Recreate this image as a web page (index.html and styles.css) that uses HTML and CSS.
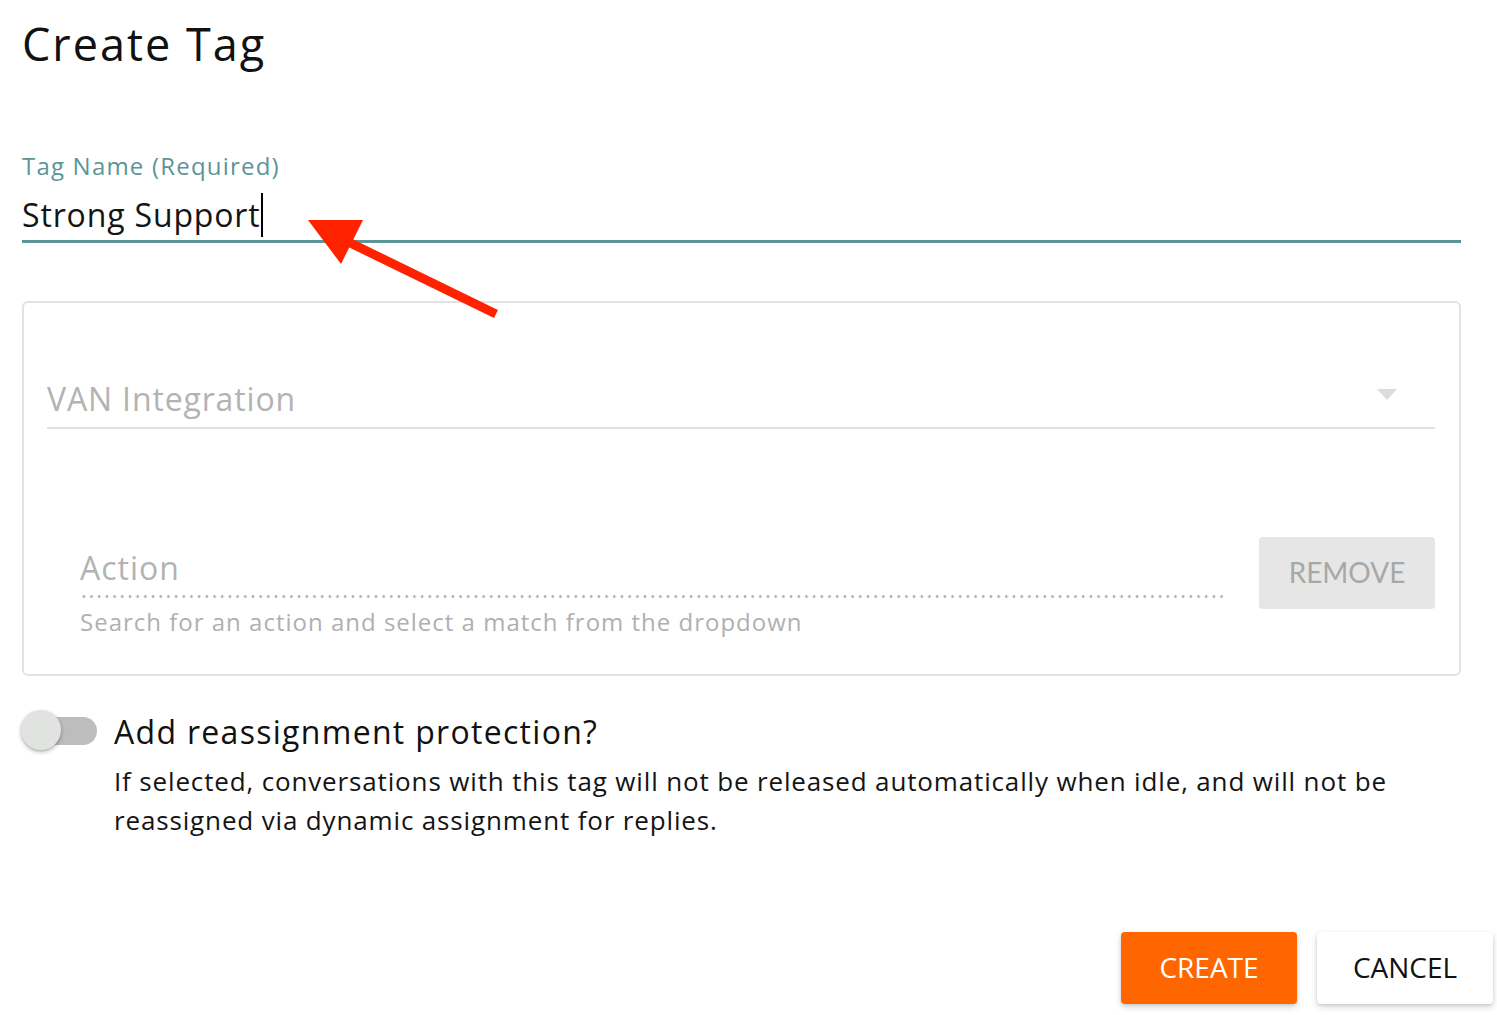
FILE: index.html
```html
<!DOCTYPE html>
<html lang="en">
<head>
<meta charset="utf-8">
<title>Create Tag</title>
<link rel="stylesheet" href="styles.css">
</head>
<body>
<div class="dialog">
  <div class="form">
    <h1 class="title">Create Tag</h1>
    <div class="field">
      <label class="field-label">Tag Name (Required)</label>
      <div class="input"><span class="input-text">Strong Support</span><span class="caret"></span></div>
    </div>
    <section class="card">
      <div class="select">
        <span class="select-text">VAN Integration</span>
        <span class="select-arrow"></span>
      </div>
      <div class="action-row">
        <div class="action-field">
          <div class="action-input">Action</div>
          <div class="helper">Search for an action and select a match from the dropdown</div>
        </div>
        <button class="btn-remove" type="button">REMOVE</button>
      </div>
    </section>
    <div class="protect">
      <div class="switch"><span class="switch-track"></span><span class="switch-thumb"></span></div>
      <div class="protect-text">
        <h2 class="protect-title">Add reassignment protection?</h2>
        <p class="protect-desc">If selected, conversations with this tag will not be released automatically when idle, and will not be reassigned via dynamic assignment for replies.</p>
      </div>
    </div>
  </div>
  <div class="actions">
    <button class="btn btn-create" type="button">CREATE</button>
    <button class="btn btn-cancel" type="button">CANCEL</button>
  </div>
  <svg class="annotation" width="1497" height="1015" viewBox="0 0 1497 1015" aria-hidden="true">
    <line x1="496" y1="314" x2="336" y2="236" stroke="#ff2200" stroke-width="9"/>
    <polygon points="308,220 363,220 341,264" fill="#ff2200"/>
  </svg>
</div>
</body>
</html>
```
FILE: styles.css
```css
* { box-sizing: border-box; }
html, body { margin: 0; padding: 0; background: #fff; }
body {
  font-family: "Open Sans", "Liberation Sans", sans-serif;
  color: #141414;
}
.dialog {
  position: relative;
  width: 1497px;
  height: 1015px;
  padding: 14px 4px 0 22px;
  overflow: hidden;
}
.form { margin-right: 32px; }
.title {
  margin: 0;
  font-size: 45px;
  line-height: 60px;
  font-weight: 400;
  letter-spacing: 2px;
  color: #111;
}
.field { margin-top: 76px; }
.field-label {
  display: block;
  font-size: 24px;
  line-height: 32px;
  letter-spacing: 1.2px;
  color: #5b9599;
}
.input {
  margin-top: 11px;
  height: 50px;
  padding-bottom: 3px;
  border-bottom: 3px solid #5b9599;
  display: flex;
  align-items: flex-start;
}
.input-text {
  font-size: 32px;
  line-height: 44px;
  letter-spacing: 0.85px;
  color: #141414;
}
.caret {
  width: 2px;
  height: 44px;
  background: #000;
}
.card {
  margin-top: 58px;
  border: 2px solid #e0e3e2;
  border-radius: 6px;
  padding: 0 24px 36px 23px;
}
.select {
  margin-top: 74px;
  height: 52px;
  padding-bottom: 6px;
  border-bottom: 2px solid #e0e0e0;
  display: flex;
  justify-content: space-between;
  align-items: flex-start;
}
.select-text {
  font-size: 32px;
  line-height: 44px;
  letter-spacing: 0.85px;
  color: #b3b3b3;
}
.select-arrow {
  width: 0;
  height: 0;
  margin-top: 12px;
  margin-right: 38px;
  border-left: 10px solid transparent;
  border-right: 10px solid transparent;
  border-top: 11px solid #dcdcdc;
}
.action-row {
  margin-top: 108px;
  padding-left: 33px;
  display: flex;
  align-items: flex-start;
  gap: 33px;
}
.action-field { flex: 1; padding-top: 9px; }
.action-input {
  font-size: 32px;
  line-height: 44px;
  letter-spacing: 1px;
  color: #b3b3b3;
  padding-bottom: 5px;
  background-image: radial-gradient(circle, #b5b5b5 1.3px, transparent 1.6px);
  background-size: 7.7px 3px;
  background-repeat: repeat-x;
  background-position: 0 100%;
  height: 52px;
}
.helper {
  margin-top: 8px;
  font-size: 24px;
  line-height: 32px;
  letter-spacing: 1px;
  color: #b0b0b0;
}
.btn-remove {
  width: 176px;
  height: 72px;
  border: 0;
  border-radius: 4px;
  background: #e6e6e6;
  color: #a8a8a8;
  font-family: Lato, "Open Sans", sans-serif;
  font-size: 28px;
  padding: 0 0 2px;
}
.protect {
  margin-top: 34px;
  display: flex;
  align-items: flex-start;
}
.switch {
  position: relative;
  flex: none;
  width: 76px;
  height: 40px;
  margin-left: -1px;
  margin-right: 17px;
}
.switch-track {
  display: block;
  margin: 7px 0 0 6px;
  width: 70px;
  height: 28px;
  border-radius: 14px;
  background: #bdbdbd;
}
.switch-thumb {
  position: absolute;
  left: 0;
  top: 0;
  width: 40px;
  height: 40px;
  border-radius: 50%;
  background: #e1e3e1;
  box-shadow: 0 2px 4px rgba(0,0,0,0.25), 0 1px 2px rgba(0,0,0,0.12);
}
.protect-text { flex: 1; }
.protect-title {
  margin: 0;
  font-size: 32px;
  line-height: 44px;
  font-weight: 400;
  letter-spacing: 1.3px;
  color: #111;
}
.protect-desc {
  margin: 8px 0 0;
  font-size: 26px;
  line-height: 39px;
  letter-spacing: 0.85px;
  color: #141414;
}
.actions {
  margin-top: 92px;
  display: flex;
  justify-content: flex-end;
  gap: 20px;
}
.btn {
  width: 176px;
  height: 72px;
  border: 0;
  border-radius: 4px;
  font-family: "Open Sans", sans-serif;
  font-size: 28px;
  padding: 0 0 2px;
  box-shadow: 0 3px 6px rgba(0,0,0,0.16), 0 1px 3px rgba(0,0,0,0.1);
}
.btn-create { background: #ff6600; color: #fff; }
.btn-cancel { background: #fff; color: #111; }
.annotation {
  position: absolute;
  left: 0;
  top: 0;
  pointer-events: none;
}
```
